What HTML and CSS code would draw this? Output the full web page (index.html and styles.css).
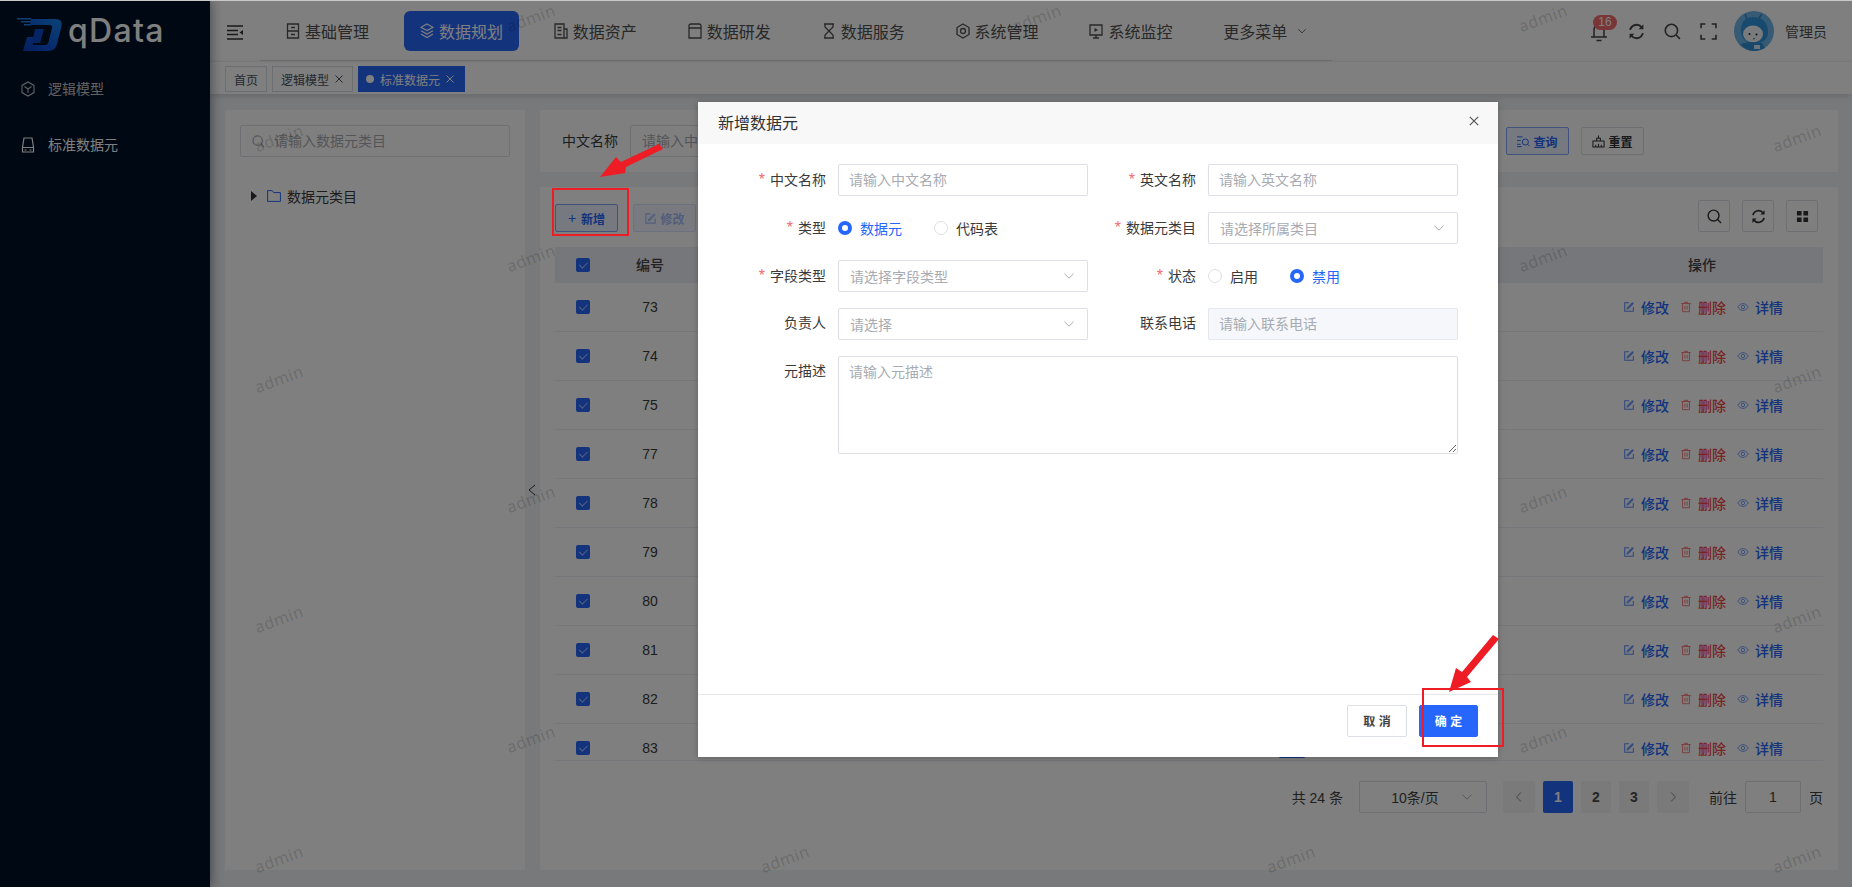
FILE: index.html
```html
<!DOCTYPE html>
<html lang="zh-CN">
<head>
<meta charset="utf-8">
<title>标准数据元</title>
<link rel="stylesheet" href="styles.css">
</head>
<body>
<svg class="defs" aria-hidden="true">
  <symbol id="i-edit" viewBox="0 0 14 14"><path d="M7 2H2v10h10V7M5.500 8.500 12 2" fill="none" stroke="currentColor" stroke-width="1.200"/><path d="M4.500 9.500l.5-2 5.500-5.500 1.500 1.500L6.500 9z" fill="none" stroke="currentColor" stroke-width="1"/></symbol>
  <symbol id="i-trash" viewBox="0 0 14 14"><path d="M1.500 3h11M5 3V1.500h4V3M3 3v9.500h8V3M5.700 5.500v4.500M8.300 5.500v4.500" fill="none" stroke="currentColor" stroke-width="1.100"/></symbol>
  <symbol id="i-eye" viewBox="0 0 16 14"><path d="M1 7c2-3 4.300-4.500 7-4.500S13 4 15 7c-2 3-4.300 4.500-7 4.500S3 10 1 7z" fill="none" stroke="currentColor" stroke-width="1.100"/><circle cx="8" cy="7" r="2.300" fill="none" stroke="currentColor" stroke-width="1.100"/></symbol>
  <symbol id="i-chev" viewBox="0 0 12 12"><path d="M1.500 3.800 6 8.200l4.500-4.400" fill="none" stroke="currentColor" stroke-width="1"/></symbol>
  <symbol id="i-x" viewBox="0 0 10 10"><path d="M1.500 1.500l7 7M8.500 1.500l-7 7" fill="none" stroke="currentColor" stroke-width="1"/></symbol>
  <symbol id="i-search" viewBox="0 0 16 16"><circle cx="7" cy="7" r="5.800" fill="none" stroke="currentColor" stroke-width="1.500"/><path d="M11.300 11.300 15 15" fill="none" stroke="currentColor" stroke-width="1.500"/></symbol>
  <symbol id="i-refresh" viewBox="0 0 16 16"><path d="M2 6.500A6.200 6.200 0 0 1 13 4.200M14 9.500A6.200 6.200 0 0 1 3 11.800" fill="none" stroke="currentColor" stroke-width="1.800"/><path d="M14.500 1.200v4.600H10zM1.500 14.800v-4.600H6z" fill="currentColor"/></symbol>
</svg>

<div class="page">
  <div class="topline"></div>
  <div class="app">
    <aside class="sidebar">
      <div class="logo">
        <svg class="logo-mark" viewBox="0 0 46 34">
          <defs><linearGradient id="lg" x1="1" y1="0" x2="0" y2="1"><stop offset="0" stop-color="#1688f0"/><stop offset=".6" stop-color="#0f55d8"/><stop offset="1" stop-color="#0b3ec0"/></linearGradient></defs>
          <path d="M0 1h14v1.500H0zM4 4h14v1.500H4zM7 7h7v1.500H7z" fill="#1f7fe8"/>
          <path d="M14 2h24q8 0 6.500 7L40 27q-1.500 7-9 7H6l4-14h8l-2.500 8H28q3 0 3.500-3L35 11q.5-3-2-3H13z" fill="url(#lg)"/>
          <path d="M18 12h9l-4 14h-8z" fill="#0c49c8"/>
        </svg>
        <span class="logo-text">qData</span>
      </div>
      <a class="side-item dim">
        <svg class="side-icon" viewBox="0 0 14 16"><path d="M7 1l6 3.400v7.200L7 15l-6-3.400V4.400zM3.500 5.500 7 8l3.500-2.500M7 8v4" fill="none" stroke="currentColor" stroke-width="1.100"/></svg>
        <span>逻辑模型</span>
      </a>
      <a class="side-item">
        <svg class="side-icon" viewBox="0 0 14 16"><path d="M3 1h8l1.500 9v5h-11v-5zM1.500 10.500h11M3.500 13h2M8.500 13h2" fill="none" stroke="currentColor" stroke-width="1.200"/></svg>
        <span>标准数据元</span>
      </a>
    </aside>

    <div class="main">
      <header class="header">
        <svg class="hamburger" viewBox="0 0 16 15"><path d="M0 1h16M0 5.500h11M0 9.500h11M0 14h16" fill="none" stroke="currentColor" stroke-width="1.400"/><path d="M16 5v5l-3.500-2.500z" fill="currentColor"/></svg>
        <nav class="nav">
          <a class="nav-item"><svg class="nav-icon" viewBox="0 0 14 16"><path d="M1.500 1h11v14h-11zM1.500 8h11M5 4.500h4M5 11.500h4" fill="none" stroke="currentColor" stroke-width="1.300"/></svg><span>基础管理</span></a>
          <a class="nav-item active"><svg class="nav-icon" viewBox="0 0 14 16"><path d="M7 1l6 3.300L7 7.600 1 4.300zM1 7.800l6 3.300 6-3.300M1 11l6 3.500 6-3.500" fill="none" stroke="currentColor" stroke-width="1.200"/></svg><span>数据规划</span></a>
          <a class="nav-item"><svg class="nav-icon" viewBox="0 0 14 16"><path d="M1 1h9v14H1zM10 6h3v9h-3M3.500 4.500h4M3.500 7.500h4M3.500 11.500h4" fill="none" stroke="currentColor" stroke-width="1.300"/></svg><span>数据资产</span></a>
          <a class="nav-item"><svg class="nav-icon" viewBox="0 0 14 16"><path d="M1 3q0-2 2-2h8q2 0 2 2v12H1zM1 5h12" fill="none" stroke="currentColor" stroke-width="1.300"/></svg><span>数据研发</span></a>
          <a class="nav-item"><svg class="nav-icon" viewBox="0 0 14 16"><path d="M2 1h10M2 15h10M3 1v3l8 8v3M11 1v3L3 12v3" fill="none" stroke="currentColor" stroke-width="1.300"/></svg><span>数据服务</span></a>
          <a class="nav-item"><svg class="nav-icon" viewBox="0 0 14 16"><path d="M7 1l6 3.500v7L7 15l-6-3.500v-7z" fill="none" stroke="currentColor" stroke-width="1.300"/><circle cx="7" cy="8" r="2.500" fill="none" stroke="currentColor" stroke-width="1.300"/></svg><span>系统管理</span></a>
          <a class="nav-item"><svg class="nav-icon" viewBox="0 0 14 16"><path d="M1 2h12v10H1zM4 15h6M7 12v3" fill="none" stroke="currentColor" stroke-width="1.300"/><path d="M5.500 5v4l3.500-2z" fill="currentColor"/></svg><span>系统监控</span></a>
          <a class="nav-item"><span>更多菜单</span><svg class="nav-caret"><use href="#i-chev"/></svg></a>
        </nav>
        <div class="tools">
          <span class="bell">
            <svg class="tool-icon" viewBox="0 0 16 20"><path d="M3 15V8q0-5 5-5t5 5v7M0 15h16M5.500 18.500h5" fill="none" stroke="currentColor" stroke-width="1.500"/></svg>
            <b class="badge">16</b>
          </span>
          <svg class="tool-icon"><use href="#i-refresh"/></svg>
          <svg class="tool-icon"><use href="#i-search"/></svg>
          <svg class="tool-icon" viewBox="0 0 16 16"><path d="M1 5V1h4M11 1h4v4M15 11v4h-4M5 15H1v-4" fill="none" stroke="currentColor" stroke-width="1.500"/></svg>
          <svg class="avatar" viewBox="0 0 40 40">
            <circle cx="20" cy="20" r="20" fill="#6fb6e8"/>
            <path d="M13 8l-2-5M25 7l3-4" stroke="#2a86c8" stroke-width="1.400" fill="none"/>
            <path d="M7 21q-1-14 12-15 13 0 15 13 1 13-13 13Q8 32 7 21z" fill="#2f95dc"/>
            <ellipse cx="19" cy="23" rx="10" ry="8.500" fill="#f4f7fa"/>
            <circle cx="15.500" cy="23" r="1" fill="#123"/><circle cx="22.500" cy="23.500" r="1" fill="#123"/>
            <path d="M19 27.500q1 1 2 0" stroke="#123" stroke-width=".7" fill="none"/>
            <path d="M6 33l9-2 13 1 3 5q-5 3-11 3-8 0-14-7z" fill="#2f8fd4"/>
            <rect x="20" y="34" width="6" height="4" fill="#d7ecf9"/>
          </svg>
          <span class="uname">管理员</span>
        </div>
      </header>

      <div class="tagbar">
        <span class="tag">首页</span>
        <span class="tag">逻辑模型<svg class="tag-x"><use href="#i-x"/></svg></span>
        <span class="tag on"><i class="tag-dot"></i>标准数据元<svg class="tag-x"><use href="#i-x"/></svg></span>
      </div>

      <div class="content">
        <section class="tree-panel">
          <div class="input tree-search">
            <svg class="ph-icon"><use href="#i-search"/></svg>
            <span class="ph">请输入数据元类目</span>
          </div>
          <div class="tree-node">
            <i class="tree-caret"></i>
            <svg class="folder" viewBox="0 0 14 12"><path d="M.6.600h4.600l1.500 2h6.700v8.800H.6z" fill="none" stroke="#2666fb" stroke-width="1"/></svg>
            <span>数据元类目</span>
          </div>
        </section>
        <span class="collapse-handle"><svg viewBox="0 0 8 12"><path d="M7 1 1 6l6 5" fill="none" stroke="currentColor" stroke-width="1"/></svg></span>

        <div class="right">
          <section class="search-panel">
            <label class="search-label">中文名称</label>
            <div class="input search-input"><span class="ph">请输入中文名称</span></div>
            <div class="search-actions">
              <button class="btn plain wide"><svg class="btn-icon" viewBox="0 0 14 12"><path d="M0 1h6M0 5h4M0 9h4M0 11.500h5" fill="none" stroke="currentColor"/><circle cx="9" cy="6.500" r="3.300" fill="none" stroke="currentColor"/><path d="M11.500 9l2 2" stroke="currentColor"/></svg>查询</button>
              <button class="btn wide"><svg class="btn-icon" viewBox="0 0 14 13"><path d="M1 6h12v6.500H1zM5 6V3h4v3M7 0v3M4 10v2.500M7 9v3.500M10 10v2.500" fill="none" stroke="currentColor" stroke-width="1.100"/></svg>重置</button>
            </div>
          </section>

          <section class="table-panel">
            <div class="toolbar">
              <button class="btn plain wide"><span class="plus">+</span>新增</button>
              <button class="btn plain off wide"><svg class="btn-icon"><use href="#i-edit"/></svg>修改</button>
              <div class="toolbar-right">
                <button class="icon-btn"><svg><use href="#i-search"/></svg></button>
                <button class="icon-btn"><svg><use href="#i-refresh"/></svg></button>
                <button class="icon-btn"><svg viewBox="0 0 14 14"><path d="M1 1h5v5H1zM8 1h5v5H8zM1 8h5v5H1zM8 8h5v5H8z" fill="currentColor"/></svg></button>
              </div>
            </div>

            <div class="thead row-grid">
              <span class="cell-c"><i class="check"></i></span>
              <span class="cell-c th">编号</span>
              <span></span><span></span><span></span>
              <span class="cell-c th">操作</span>
            </div>
            <div class="tbody">
              <div class="row row-grid"><span class="cell-c"><i class="check"></i></span><span class="cell-c">73</span><span></span><span class="cell-c"><i class="switch"></i></span><span></span><span class="actions"><a><svg><use href="#i-edit"/></svg>修改</a><a class="del"><svg><use href="#i-trash"/></svg>删除</a><a><svg><use href="#i-eye"/></svg>详情</a></span></div>
              <div class="row row-grid"><span class="cell-c"><i class="check"></i></span><span class="cell-c">74</span><span></span><span class="cell-c"><i class="switch"></i></span><span></span><span class="actions"><a><svg><use href="#i-edit"/></svg>修改</a><a class="del"><svg><use href="#i-trash"/></svg>删除</a><a><svg><use href="#i-eye"/></svg>详情</a></span></div>
              <div class="row row-grid"><span class="cell-c"><i class="check"></i></span><span class="cell-c">75</span><span></span><span class="cell-c"><i class="switch"></i></span><span></span><span class="actions"><a><svg><use href="#i-edit"/></svg>修改</a><a class="del"><svg><use href="#i-trash"/></svg>删除</a><a><svg><use href="#i-eye"/></svg>详情</a></span></div>
              <div class="row row-grid"><span class="cell-c"><i class="check"></i></span><span class="cell-c">77</span><span></span><span class="cell-c"><i class="switch"></i></span><span></span><span class="actions"><a><svg><use href="#i-edit"/></svg>修改</a><a class="del"><svg><use href="#i-trash"/></svg>删除</a><a><svg><use href="#i-eye"/></svg>详情</a></span></div>
              <div class="row row-grid"><span class="cell-c"><i class="check"></i></span><span class="cell-c">78</span><span></span><span class="cell-c"><i class="switch"></i></span><span></span><span class="actions"><a><svg><use href="#i-edit"/></svg>修改</a><a class="del"><svg><use href="#i-trash"/></svg>删除</a><a><svg><use href="#i-eye"/></svg>详情</a></span></div>
              <div class="row row-grid"><span class="cell-c"><i class="check"></i></span><span class="cell-c">79</span><span></span><span class="cell-c"><i class="switch"></i></span><span></span><span class="actions"><a><svg><use href="#i-edit"/></svg>修改</a><a class="del"><svg><use href="#i-trash"/></svg>删除</a><a><svg><use href="#i-eye"/></svg>详情</a></span></div>
              <div class="row row-grid"><span class="cell-c"><i class="check"></i></span><span class="cell-c">80</span><span></span><span class="cell-c"><i class="switch"></i></span><span></span><span class="actions"><a><svg><use href="#i-edit"/></svg>修改</a><a class="del"><svg><use href="#i-trash"/></svg>删除</a><a><svg><use href="#i-eye"/></svg>详情</a></span></div>
              <div class="row row-grid"><span class="cell-c"><i class="check"></i></span><span class="cell-c">81</span><span></span><span class="cell-c"><i class="switch"></i></span><span></span><span class="actions"><a><svg><use href="#i-edit"/></svg>修改</a><a class="del"><svg><use href="#i-trash"/></svg>删除</a><a><svg><use href="#i-eye"/></svg>详情</a></span></div>
              <div class="row row-grid"><span class="cell-c"><i class="check"></i></span><span class="cell-c">82</span><span></span><span class="cell-c"><i class="switch"></i></span><span></span><span class="actions"><a><svg><use href="#i-edit"/></svg>修改</a><a class="del"><svg><use href="#i-trash"/></svg>删除</a><a><svg><use href="#i-eye"/></svg>详情</a></span></div>
              <div class="row row-grid"><span class="cell-c"><i class="check"></i></span><span class="cell-c">83</span><span></span><span class="cell-c"><i class="switch"></i></span><span></span><span class="actions"><a><svg><use href="#i-edit"/></svg>修改</a><a class="del"><svg><use href="#i-trash"/></svg>删除</a><a><svg><use href="#i-eye"/></svg>详情</a></span></div>
            </div>

            <div class="pager">
              <span class="total">共 24 条</span>
              <div class="input size-select"><span>10条/页</span><svg class="chev"><use href="#i-chev"/></svg></div>
              <span class="pg arrow"><svg viewBox="0 0 8 12"><path d="M6 1.500 1.500 6 6 10.500" fill="none" stroke="currentColor"/></svg></span>
              <span class="pg cur">1</span>
              <span class="pg">2</span>
              <span class="pg">3</span>
              <span class="pg arrow"><svg viewBox="0 0 8 12"><path d="M2 1.500 6.500 6 2 10.500" fill="none" stroke="currentColor"/></svg></span>
              <span class="goto">前往</span>
              <div class="input goto-input">1</div>
              <span class="goto-unit">页</span>
            </div>
          </section>
        </div>
      </div>
    </div>
  </div>

  <div class="watermark" aria-hidden="true">
    <div class="wm-row a"><span>admin</span><span>admin</span><span>admin</span></div>
    <div class="wm-row b"><span>admin</span><span>admin</span><span>admin</span><span>admin</span></div>
    <div class="wm-row a"><span>admin</span><span>admin</span><span>admin</span></div>
    <div class="wm-row b"><span>admin</span><span>admin</span><span>admin</span><span>admin</span></div>
    <div class="wm-row a"><span>admin</span><span>admin</span><span>admin</span></div>
    <div class="wm-row b"><span>admin</span><span>admin</span><span>admin</span><span>admin</span></div>
    <div class="wm-row a"><span>admin</span><span>admin</span><span>admin</span></div>
    <div class="wm-row b"><span>admin</span><span>admin</span><span>admin</span><span>admin</span></div>
  </div>

  <div class="overlay"></div>

  <div class="modal">
    <div class="modal-head">
      <span class="modal-title">新增数据元</span>
      <svg class="modal-close"><use href="#i-x"/></svg>
    </div>
    <form class="modal-body">
      <label class="flabel"><em>*</em>中文名称</label>
      <input class="finput" placeholder="请输入中文名称">
      <label class="flabel"><em>*</em>英文名称</label>
      <input class="finput" placeholder="请输入英文名称">

      <label class="flabel"><em>*</em>类型</label>
      <div class="radios gap-a"><span class="radio on"><i></i>数据元</span><span class="radio"><i></i>代码表</span></div>
      <label class="flabel"><em>*</em>数据元类目</label>
      <div class="fselect"><span>请选择所属类目</span><svg class="chev"><use href="#i-chev"/></svg></div>

      <label class="flabel"><em>*</em>字段类型</label>
      <div class="fselect"><span>请选择字段类型</span><svg class="chev"><use href="#i-chev"/></svg></div>
      <label class="flabel"><em>*</em>状态</label>
      <div class="radios gap-b"><span class="radio"><i></i>启用</span><span class="radio on"><i></i>禁用</span></div>

      <label class="flabel">负责人</label>
      <div class="fselect"><span>请选择</span><svg class="chev"><use href="#i-chev"/></svg></div>
      <label class="flabel">联系电话</label>
      <input class="finput disabled" placeholder="请输入联系电话" disabled>

      <label class="flabel">元描述</label>
      <textarea class="farea" placeholder="请输入元描述"></textarea>
    </form>
    <div class="modal-foot">
      <button class="mbtn">取 消</button>
      <button class="mbtn primary">确 定</button>
    </div>
  </div>

  <div class="mark mark-add"></div>
  <div class="mark mark-ok"></div>
  <svg class="arrows" viewBox="0 0 1852 887" aria-hidden="true">
    <polygon points="600,177 616,157 621,162 659,144 663,149 626,167 625,173"/>
    <polygon points="1449,692 1456,668 1462,672 1493,635 1499,639 1467,677 1471,682"/>
  </svg>
</div>
</body>
</html>
```

FILE: styles.css
```css
* { box-sizing: border-box; }
html, body { margin: 0; padding: 0; }
body {
  font-family: "Liberation Sans", "Noto Sans CJK SC", sans-serif;
  font-size: 14px;
  color: #3a3a3a;
  background: #f0f2f5;
}
a { color: inherit; text-decoration: none; }
button { font-family: inherit; }
.defs { position: absolute; width: 0; height: 0; }

.page { position: relative; width: 1852px; height: 887px; overflow: hidden; }
.topline { height: 1px; background: #c9c9c9; position: relative; z-index: 50; }
.app { display: flex; height: 886px; }

/* sidebar */
.sidebar { width: 210px; flex: none; background: #001226; color: #fff; position: relative; z-index: 5; box-shadow: 2px 0 10px rgba(0, 21, 41, .4); }
.logo { height: 60px; display: flex; align-items: center; padding-left: 17px; gap: 5px; }
.logo-mark { width: 46px; height: 34px; margin-top: 5px; }
.logo-text { font-family: "Inter", sans-serif; font-size: 32px; font-weight: 500; line-height: 40px; color: #fff; letter-spacing: 1.300px; margin-top: -1px; }
.side-item { display: flex; align-items: center; height: 56px; padding-left: 21px; gap: 13px; font-size: 14px; }
.side-item span { padding-bottom: 2px; }
.side-item.dim { color: #c4c4c4; }
.side-icon { width: 14px; height: 16px; }

/* main */
.main { flex: 1; min-width: 0; display: flex; flex-direction: column; }
.header { height: 60px; display: flex; align-items: flex-start; background: #fff; padding-left: 17px; flex: none; }
.hamburger { width: 16px; height: 15px; margin-top: 24px; color: #333; flex: none; }
.nav { width: 1072px; height: 60px; margin-left: 17px; padding: 10px 0 0 10px; border-bottom: 1px solid #dcdfe6; display: flex; gap: 18.900px; flex: none; }
.nav-item { height: 40px; padding: 0 16px; border-radius: 6px; display: flex; align-items: center; gap: 5px; font-size: 16px; color: #505050; white-space: nowrap; }
.nav-item span { padding-bottom: 1px; }
.nav-item.active { background: #2666fb; color: #fff; }
.nav-icon { width: 14px; height: 16px; flex: none; }
.nav-caret { width: 10px; height: 10px; margin-left: 5px; }
.tools { margin-left: 259px; display: flex; align-items: center; height: 40px; margin-top: 10px; color: #444; }
.bell { position: relative; display: block; width: 16px; height: 20px; margin-right: 21px; margin-top: 2px; }
.bell .tool-icon { width: 16px; height: 20px; margin: 0; display: block; }
.badge { position: absolute; left: 2px; top: -7px; width: 24px; height: 15px; line-height: 15px; border-radius: 8px; background: #f56c6c; color: #fff; font-size: 12px; font-weight: 400; text-align: center; }
.tool-icon { width: 17px; height: 17px; margin-right: 19px; flex: none; }
.avatar { width: 40px; height: 40px; margin-left: -2px; flex: none; }
.uname { margin-left: 11px; font-size: 14px; color: #505050; white-space: nowrap; }

/* tags */
.tagbar { height: 33px; flex: none; background: #fff; display: flex; gap: 5px; padding: 4px 0 0 15px; border-top: 1px solid #eee; box-shadow: 0 2px 6px rgba(0, 0, 0, .14); position: relative; z-index: 2; }
.tag { height: 26px; display: flex; align-items: center; padding: 0 8px; font-size: 12px; border: 1px solid #d8dce5; color: #495060; background: #fff; white-space: nowrap; }
.tag.on { background: #2666fb; border-color: #2666fb; color: #fff; padding: 0 9px 0 7px; }
.tag-dot { width: 8px; height: 8px; border-radius: 50%; background: #fff; margin-right: 6px; }
.tag-x { width: 10px; height: 10px; margin-left: 5px; }

/* content */
.content { flex: 1; min-height: 0; display: flex; padding: 16px 14px 17px 15px; background: #f0f2f5; position: relative; }
.tree-panel { width: 300px; flex: none; background: #fff; padding: 15px; }
.collapse-handle { width: 15px; flex: none; display: flex; align-items: center; color: #333; }
.collapse-handle svg { width: 8px; height: 12px; margin-left: 3px; }
.input { border: 1px solid #dcdfe6; border-radius: 2px; background: #fff; height: 32px; display: flex; align-items: center; }
.ph { color: #a8abb2; font-size: 14px; white-space: nowrap; padding-bottom: 2px; }
.tree-search { padding-left: 11px; }
.ph-icon { width: 13px; height: 13px; color: #a8abb2; margin-right: 9px; }
.tree-node { display: flex; align-items: center; margin-top: 29px; padding-left: 11px; height: 20px; color: #3a3a3a; }
.tree-caret { width: 0; height: 0; border-style: solid; border-width: 5px 0 5px 6px; border-color: transparent transparent transparent #333; margin-right: 10px; }
.folder { width: 14px; height: 12px; margin-right: 6px; }

.right { flex: 1; min-width: 0; display: flex; flex-direction: column; gap: 15px; }
.search-panel { height: 62px; flex: none; background: #fff; display: flex; align-items: center; padding-left: 22px; padding-right: 194px; }
.search-label { margin-right: 12px; color: #3a3a3a; padding-bottom: 2px; }
.search-input { width: 240px; padding-left: 11px; }
.search-actions { margin-left: auto; display: flex; gap: 12px; }

.btn { height: 28px; padding: 0; display: inline-flex; align-items: center; justify-content: center; font-size: 12px; font-weight: 700; color: #303133; background: #fff; border: 1px solid #dcdfe6; border-radius: 2px; white-space: nowrap; }
.btn.wide { width: 63px; }
.btn.plain { background: #edf2ff; border-color: #82a5fb; color: #2666fb; }
.btn.plain.off { background: #f1f5ff; border-color: #d8e3fe; color: #a4bbf8; }
.btn-icon { width: 13px; height: 13px; margin-right: 3px; flex: none; }
.plus { font-size: 14px; font-weight: 400; margin-right: 5px; line-height: 1; }

.table-panel { flex: 1; min-height: 0; background: #fff; padding: 13px 15px 0; display: flex; flex-direction: column; }
.toolbar { height: 32px; display: flex; align-items: flex-end; gap: 15px; flex: none; }
.toolbar-right { margin-left: auto; margin-right: 5px; display: flex; gap: 12px; }
.icon-btn { width: 32px; height: 32px; padding: 0; border: 1px solid #dcdfe6; border-radius: 2px; background: #fff; display: flex; align-items: center; justify-content: center; color: #333; }
.icon-btn svg { width: 15px; height: 15px; }
.icon-btn:last-child svg { width: 13px; height: 13px; }

.row-grid { display: grid; grid-template-columns: 56px 78px 589px 28px 276px 240px; align-items: center; }
.cell-c { display: flex; justify-content: center; align-items: center; }
.th { padding-bottom: 2px; }
.thead { height: 36px; margin-top: 15px; background: #ebeef5; font-weight: 500; font-size: 14px; color: #444; flex: none; }
.tbody { height: 478px; overflow: hidden; border-bottom: 1px solid #ebeef5; flex: none; }
.row { height: 49px; border-bottom: 1px solid #ebeef5; font-size: 14px; color: #3a3a3a; }
.check { width: 14px; height: 14px; border-radius: 2px; background: #2666fb; display: block; position: relative; }
.check::after { content: ""; position: absolute; left: 4.500px; top: 2px; width: 3.500px; height: 7px; border: solid #a8c1ff; border-width: 0 1.300px 1.300px 0; transform: rotate(45deg); }
.switch { width: 28px; height: 20px; background: #2666fb; border-radius: 3px; display: block; }
.actions { display: flex; padding-left: 41px; gap: 11px; }
.actions a { display: flex; align-items: center; color: #2666fb; font-weight: 500; white-space: nowrap; }
.actions a.del { color: #f04848; }
.actions svg { width: 12px; height: 12px; margin-right: 6px; opacity: .75; }

.pager { display: flex; align-items: center; justify-content: flex-end; height: 32px; margin-top: 20px; font-size: 14px; color: #3f3f3f; flex: none; }
.total { margin-right: 16px; white-space: nowrap; }
.size-select { width: 128px; justify-content: center; margin-right: 16px; position: relative; padding-right: 24px; padding-left: 8px; }
.chev { width: 12px; height: 12px; color: #a8abb2; flex: none; }
.size-select .chev { position: absolute; right: 13px; top: 9px; }
.pg { width: 30px; height: 32px; margin-right: 8px; background: #f4f4f5; border-radius: 2px; display: flex; align-items: center; justify-content: center; font-weight: 700; color: #4a4a4a; }
.pg.arrow { width: 32px; color: #888; }
.pg.arrow svg { width: 8px; height: 12px; }
.pg.cur { background: #2666fb; color: #fff; }
.goto { margin-left: 12px; margin-right: 8px; white-space: nowrap; }
.goto-input { width: 56px; justify-content: center; }
.goto-unit { margin-left: 8px; }

/* watermark */
.watermark { position: absolute; left: 210px; top: -42px; right: 0; bottom: 0; overflow: hidden; pointer-events: none; z-index: 10; }
.wm-row { height: 120.200px; display: flex; align-items: center; }
.wm-row.a { padding-left: 68px; }
.wm-row.b { margin-left: -184px; }
.wm-row span { width: 506px; flex: none; text-align: center; font-family: "Noto Sans", sans-serif; font-size: 16px; letter-spacing: .6px; color: rgba(0, 0, 0, .17); transform: rotate(-20deg); }

.overlay { position: absolute; inset: 0; background: rgba(0, 0, 0, .5); z-index: 20; }

/* modal */
.modal { position: absolute; left: 698px; top: 102px; width: 800px; height: 655px; background: #fff; z-index: 30; display: flex; flex-direction: column; box-shadow: 0 1px 6px rgba(0, 0, 0, .25); }
.modal-head { height: 42px; flex: none; background: #f8f8f8; display: flex; align-items: center; justify-content: space-between; padding: 0 18px 0 20px; }
.modal-title { font-size: 16px; color: #303133; padding-bottom: 2px; }
.modal-close { width: 12px; height: 12px; color: #555; margin-bottom: 4px; }
.modal-body { flex: 1; min-height: 0; display: grid; grid-template-columns: 128px 250px 96px 250px; grid-auto-rows: 32px; gap: 16px 12px; padding-top: 20px; align-content: start; }
.flabel { text-align: right; line-height: 31px; font-size: 14px; color: #3a3a3a; white-space: nowrap; }
.flabel em { color: #f56c6c; font-style: normal; margin-right: 5px; font-size: 16px; font-family: "Liberation Sans", sans-serif; }
.finput, .fselect, .farea { border: 1px solid #dcdfe6; border-radius: 2px; background: #fff; font-family: inherit; font-size: 14px; padding: 0 10px 1px; width: 250px; height: 32px; color: #303133; outline: none; }
.finput::placeholder, .farea::placeholder { color: #a8abb2; opacity: 1; }
.finput.disabled { background: #f5f7fa; border-color: #e4e7ed; }
.fselect { display: flex; align-items: center; justify-content: space-between; color: #a8abb2; padding: 0 12px 1px 11px; }
.fselect .chev { margin-top: 1px; }
.farea { grid-column: 2 / 5; width: 620px; height: 98px; padding: 4px 10px; resize: both; line-height: 22px; }
.radios { display: flex; align-items: center; padding-bottom: 1px; }
.gap-a { gap: 32px; }
.gap-b { gap: 32px; }
.radio { display: flex; align-items: center; font-size: 14px; color: #3a3a3a; white-space: nowrap; }
.radio i { width: 14px; height: 14px; border: 1px solid #dcdfe6; border-radius: 50%; margin: 1px 8px 0 0; background: #fff; flex: none; }
.radio.on { color: #2666fb; }
.radio.on i { border: 4.500px solid #2666fb; background: #fff; }
.modal-foot { height: 63px; flex: none; border-top: 1px solid #e8e8e8; display: flex; justify-content: flex-end; gap: 12px; padding: 10px 20px 0 0; }
.mbtn { width: 60px; height: 32px; font-size: 12px; font-weight: 700; border: 1px solid #dcdfe6; background: #fff; color: #444; border-radius: 2px; padding: 0 0 1px; }
.mbtn.primary { width: 59px; background: #2666fb; border-color: #2666fb; color: #fff; }

/* annotations */
.mark { position: absolute; border: 2px solid #ee1c25; z-index: 40; }
.mark-add { left: 552px; top: 188px; width: 77px; height: 48px; }
.mark-ok { left: 1422px; top: 688px; width: 82px; height: 59px; }
.arrows { position: absolute; inset: 0; width: 1852px; height: 887px; z-index: 41; pointer-events: none; }
.arrows polygon { fill: #ee1c25; }
```
